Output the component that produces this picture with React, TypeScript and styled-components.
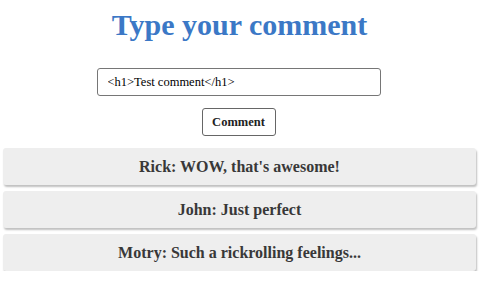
import React from "react";
import styled, { createGlobalStyle } from "styled-components";

const Global = createGlobalStyle`
  html, body { margin: 0; padding: 0; background: #fff; }
  body { font-family: "Liberation Serif", "Times New Roman", serif; }
`;

const Page = styled.div`
  display: flex;
  flex-direction: column;
  align-items: center;
  padding: 8px 4px 0 3px;
`;

const Title = styled.h1`
  margin: 0;
  font-size: 30px;
  font-weight: bold;
  color: #3b78c6;
  line-height: 34px;
`;

const Input = styled.input`
  box-sizing: border-box;
  margin-top: 26px;
  margin-right: 2px;
  width: 284px;
  height: 28px;
  border: 1px solid #767676;
  border-radius: 3px;
  padding: 0 10px;
  font-family: "Liberation Serif", serif;
  font-size: 12.5px;
  color: #000;
  outline: none;
`;

const Button = styled.button`
  box-sizing: border-box;
  margin-top: 12px;
  margin-right: 2px;
  width: 74px;
  height: 28px;
  background: #fff;
  border: 1.5px solid #666;
  border-radius: 3px;
  font-family: "Liberation Serif", serif;
  font-weight: bold;
  font-size: 12.5px;
  color: #222;
`;

const List = styled.div`
  align-self: stretch;
  display: flex;
  flex-direction: column;
  gap: 6px;
  margin-top: 12px;
`;

const Card = styled.div`
  height: 37px;
  background: #eeeeee;
  border-radius: 3px;
  box-shadow: 1px 2px 2px rgba(0, 0, 0, 0.25);
  display: flex;
  align-items: center;
  justify-content: center;
  font-weight: bold;
  font-size: 16px;
  color: #383838;
`;

const comments = [
  "Rick: WOW, that's awesome!",
  "John: Just perfect",
  "Motry: Such a rickrolling feelings...",
];

export default function App() {
  return (
    <>
      <Global />
      <Page>
        <Title>Type your comment</Title>
        <Input defaultValue="<h1>Test comment</h1>" />
        <Button>Comment</Button>
        <List>
          {comments.map((c) => (
            <Card key={c}>{c}</Card>
          ))}
        </List>
      </Page>
    </>
  );
}
